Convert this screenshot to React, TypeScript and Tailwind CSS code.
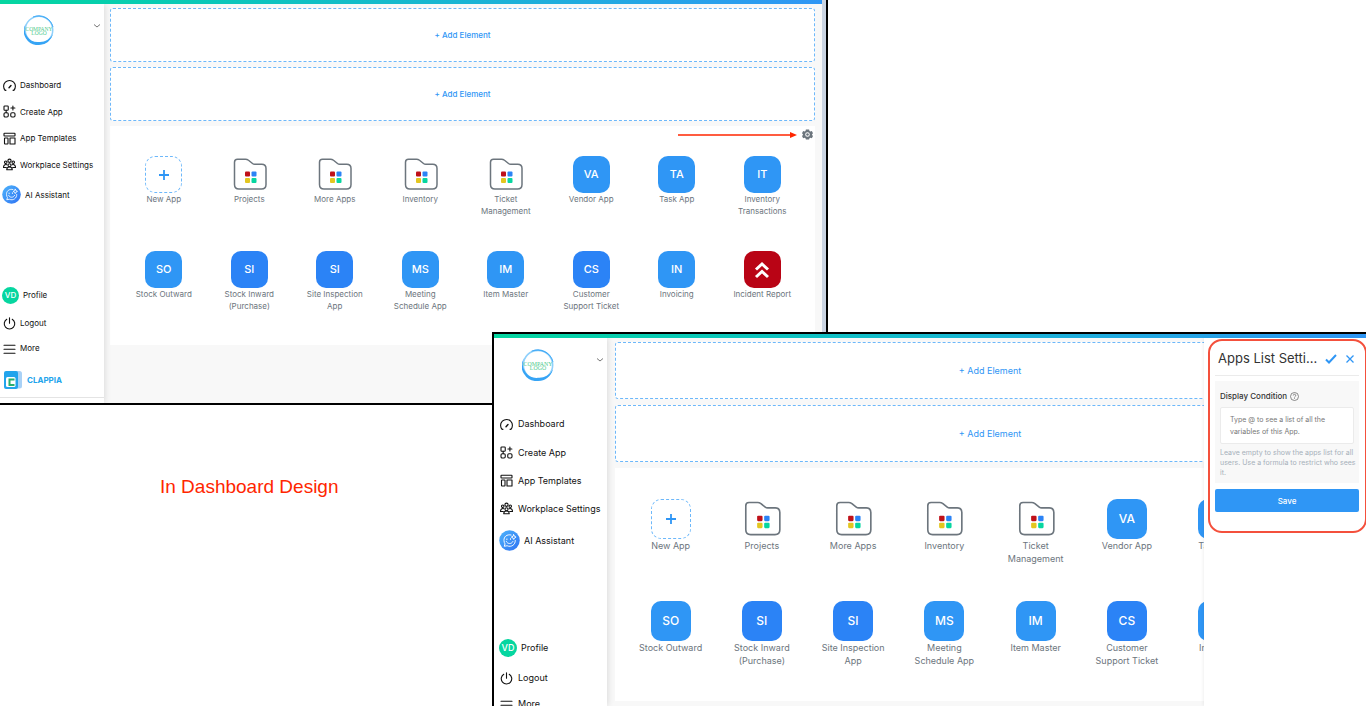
import type { ReactNode } from 'react'

type Size = 'sm' | 'lg'

type AppItem = {
  name: string
  kind?: 'new' | 'folder' | 'alert'
  code?: string
  dark?: boolean
}

const APPS: AppItem[] = [
  { name: 'New App', kind: 'new' },
  { name: 'Projects', kind: 'folder' },
  { name: 'More Apps', kind: 'folder' },
  { name: 'Inventory', kind: 'folder' },
  { name: 'Ticket Management', kind: 'folder' },
  { name: 'Vendor App', code: 'VA' },
  { name: 'Task App', code: 'TA' },
  { name: 'Inventory Transactions', code: 'IT' },
  { name: 'Stock Outward', code: 'SO' },
  { name: 'Stock Inward (Purchase)', code: 'SI', dark: true },
  { name: 'Site Inspection App', code: 'SI', dark: true },
  { name: 'Meeting Schedule App', code: 'MS' },
  { name: 'Item Master', code: 'IM' },
  { name: 'Customer Support Ticket', code: 'CS', dark: true },
  { name: 'Invoicing', code: 'IN' },
  { name: 'Incident Report', kind: 'alert' },
]

const STYLES = {
  sm: {
    sidebar: 'w-[104px] text-[8px]',
    header: 'h-[68px] pt-[11px] pl-[24px] pr-[3px]',
    logo: 'h-[30px] w-[30px]',
    chevron: 'mt-[7px]',
    nav: 'h-[106px]',
    indent: 'gap-[4px] pl-[3px]',
    badgeIndent: 'gap-[4px] pl-[2px]',
    assistant: 'mt-[5px]',
    assistantIcon: 'h-[19px] w-[19px]',
    profile: 'mt-[80px]',
    avatar: 'h-[17px] w-[17px]',
    logout: 'mt-[8px]',
    more: 'mt-[5px]',
    main: 'gap-[5px] pl-[6px] pr-[7px]',
    slot: 'h-[54px] text-[8px] font-medium',
    section: 'pr-[10px] pl-[11px]',
    toolbar: 'h-[30px]',
    grid: 'gap-y-[34px] pb-[33px]',
    tile: 'h-[37px] w-[37px] text-[11px]',
    label: 'h-[24px] w-[64px] text-[8px] leading-[12px]',
  },
  lg: {
    sidebar: 'w-[113px] text-[9px]',
    header: 'h-[72px] pt-[11px] pl-[28px] pr-[3px]',
    logo: 'h-[32px] w-[32px]',
    chevron: 'mt-[7px]',
    nav: 'h-[113px]',
    indent: 'gap-[5px] pl-[6px]',
    badgeIndent: 'gap-[4px] pl-[5px]',
    assistant: 'mt-[6px]',
    assistantIcon: 'h-[21px] w-[21px]',
    profile: 'mt-[87px]',
    avatar: 'h-[18px] w-[18px]',
    logout: 'mt-[10px]',
    more: 'mt-[6px]',
    main: 'gap-[6px] pl-[8px] pr-px',
    slot: 'h-[57px] text-[9px]',
    section: 'px-[10px]',
    toolbar: 'h-[31px]',
    grid: 'gap-y-[36px] pb-[34px]',
    tile: 'h-[40px] w-[40px] text-[12px]',
    label: 'h-[26px] w-[70px] text-[9px] leading-[13px]',
  },
}

function LineIcon({ children }: { children: ReactNode }) {
  return (
    <svg
      viewBox="0 0 26 26"
      className="h-[13px] w-[13px] shrink-0"
      fill="none"
      stroke="currentColor"
      strokeWidth="2.2"
      strokeLinecap="round"
      strokeLinejoin="round"
      aria-hidden="true"
    >
      {children}
    </svg>
  )
}

const NAV: { label: string; icon: ReactNode }[] = [
  {
    label: 'Dashboard',
    icon: (
      <>
        <path d="M6 22.5l-1.500 .5a11.800 11.800 0 1 1 17 0l-1.500-.5" />
        <path d="M12 17.500l4-4.500" strokeWidth="2.800" />
      </>
    ),
  },
  {
    label: 'Create App',
    icon: (
      <>
        <rect x="2" y="2" width="8.5" height="8.5" rx="1.5" />
        <rect x="2" y="15.5" width="8.5" height="8.5" rx="2.5" />
        <rect x="15.5" y="15.5" width="8.5" height="8.5" rx="2.5" />
        <path d="M19.8 2v8M15.8 6h8M6.3 10.5v5" />
      </>
    ),
  },
  {
    label: 'App Templates',
    icon: (
      <>
        <rect x="2" y="2.5" width="22" height="5.5" rx="1" />
        <rect x="3" y="12" width="7" height="12" rx="1" />
        <path d="M14 12h10v12h-10z" />
      </>
    ),
  },
  {
    label: 'Workplace Settings',
    icon: (
      <>
        <circle cx="13" cy="5.5" r="3.2" />
        <circle cx="5.5" cy="8.5" r="2.5" />
        <circle cx="20.5" cy="8.5" r="2.5" />
        <circle cx="13" cy="14.5" r="3" />
        <path d="M7.5 23.5c0-3.5 2.2-5.5 5.5-5.5s5.500 2 5.500 5.500zM8 13.500c-4-1.500-7 1-7 5.500h5.500M18 13.500c4-1.500 7 1 7 5.500h-5.500" />
      </>
    ),
  },
]

function CompanyLogo({ className }: { className: string }) {
  return (
    <svg viewBox="0 0 60 60" className={className} role="img" aria-label="Company logo">
      <circle cx="30" cy="30" r="27.500" fill="none" stroke="#8fd0fb" strokeWidth="3" />
      <path
        d="M4 17A28 28 0 0 0 30 60A29 29 0 0 0 58 38A28 26 0 0 1 30 54A26 26 0 0 1 4 17Z"
        fill="#36a4f5"
      />
      <path d="M18 4A29 29 0 0 1 58 24A30 28 0 0 0 18 4Z" fill="#36a4f5" stroke="#36a4f5" />
      <g fill="#4dc98c" fontFamily="Liberation Serif, serif" textAnchor="middle">
        <text x="30" y="31" fontSize="11">
          COMPANY
        </text>
        <text x="30" y="39" fontSize="11">
          LOGO
        </text>
      </g>
    </svg>
  )
}

function AssistantIcon({ className }: { className: string }) {
  return (
    <svg viewBox="0 0 40 40" className={`shrink-0 ${className}`} fill="none" aria-hidden="true">
      <defs>
        <linearGradient id="assistant" x1="0" y1="0" x2="1" y2="1">
          <stop offset="0" stopColor="#4db4fb" />
          <stop offset="1" stopColor="#2f72f3" />
        </linearGradient>
      </defs>
      <circle cx="20" cy="20" r="19.500" fill="url(#assistant)" />
      <g stroke="#fff" strokeWidth="1.800" strokeLinecap="round" strokeLinejoin="round">
        <path d="M23 9.500C15 7.500 9 13 9.500 20c0 3 1 5 2 6.500L10 31l5.500-1c8 3.500 16-2 15.500-10" />
        <path d="M14 22c2 5 10 5.500 12.500 0M15 17v1.500M22 16.500v1.500" />
        <path d="M28 9l1.500 3 3 1.500-3 1.500-1.500 3-1.500-3-3-1.500 3-1.500z" />
      </g>
    </svg>
  )
}

function ClappiaLogo() {
  return (
    <svg viewBox="0 0 36 36" className="h-[18px] w-[18px] shrink-0" aria-hidden="true">
      <rect x="8" y="0" width="28" height="35" rx="5" fill="#a9d1f6" />
      <rect x="0" y="0" width="28" height="36" rx="4" fill="#22a4ec" />
      <rect x="4" y="12" width="19" height="20" rx="3" fill="#fff" />
      <path d="M19 19v-2h-8v11h8v-2" fill="none" stroke="#27ae6d" strokeWidth="4" />
    </svg>
  )
}

function FolderIcon() {
  return (
    <svg viewBox="0 0 74 74" className="h-full w-full" aria-hidden="true">
      <path
        d="M13 6.500h16c2.500 0 4 .6 6 2l8 6.500c1.500 1.200 2.500 1.500 4.500 1.500h14c6 0 8.500 3 8.500 8.500V57c0 6-3.500 9-9 9H16c-5.500 0-9-3-9-9V12.500c0-4 2.500-6 6-6z"
        fill="none"
        stroke="#6c757d"
        strokeWidth="3"
        strokeLinejoin="round"
      />
      <rect x="28" y="31" width="10" height="10" rx="2" fill="#bf1019" />
      <rect x="41" y="31" width="10" height="10" rx="2" fill="#2b83f6" />
      <rect x="28" y="44" width="10" height="10" rx="2" fill="#e3c620" />
      <rect x="41" y="44" width="10" height="10" rx="2" fill="#07d6a0" />
    </svg>
  )
}

function TileFace({ app, className }: { app: AppItem; className: string }) {
  if (app.kind === 'folder') {
    return (
      <span className={className}>
        <FolderIcon />
      </span>
    )
  }
  if (app.kind === 'new') {
    return (
      <span
        className={`flex items-center justify-center rounded-[10px] border border-dashed border-[#6db8fa] ${className}`}
      >
        <svg viewBox="0 0 10 10" className="h-[10px] w-[10px]" aria-hidden="true">
          <path d="M5 0v10M0 5h10" stroke="#2f96f5" strokeWidth="1.800" />
        </svg>
      </span>
    )
  }
  if (app.kind === 'alert') {
    return (
      <span className={`flex items-center justify-center rounded-[10px] bg-[#b90415] ${className}`}>
        <svg viewBox="0 0 16 18" className="h-[18px] w-[16px]" aria-hidden="true">
          <path
            d="M2 8.500l6-5.500 6 5.500M2 16l6-5.500 6 5.500"
            fill="none"
            stroke="#fff"
            strokeWidth="3"
          />
        </svg>
      </span>
    )
  }
  return (
    <span
      className={`flex items-center justify-center rounded-[10px] font-medium text-white ${
        app.dark ? 'bg-[#2b83f6]' : 'bg-[#2f96f5]'
      } ${className}`}
    >
      {app.code}
    </span>
  )
}

function Sidebar({ size }: { size: Size }) {
  const s = STYLES[size]
  return (
    <aside className={`z-10 shrink-0 bg-white text-[#111] shadow-[1px_0_6px_rgba(0,0,0,0.12)] ${s.sidebar}`}>
      <div className={`flex items-start justify-between ${s.header}`}>
        <CompanyLogo className={s.logo} />
        <button type="button" aria-label="Switch workplace" className={s.chevron}>
          <svg viewBox="0 0 8 8" className="block h-[8px] w-[8px]" fill="none" stroke="#777" aria-hidden="true">
            <path d="M1 2.500l3 2.500 3-2.500" />
          </svg>
        </button>
      </div>

      <nav className={`grid grid-rows-4 ${s.nav}`}>
        {NAV.map((item) => (
          <a key={item.label} href="#" className={`flex items-center ${s.indent}`}>
            <LineIcon>{item.icon}</LineIcon>
            <span className="whitespace-nowrap">{item.label}</span>
          </a>
        ))}
      </nav>

      <a href="#" className={`flex h-[22px] items-center ${s.badgeIndent} ${s.assistant}`}>
        <AssistantIcon className={s.assistantIcon} />
        <span className="pt-[2px]">AI Assistant</span>
      </a>

      <a href="#" className={`flex h-[20px] items-center ${s.badgeIndent} ${s.profile}`}>
        <span
          className={`flex items-center justify-center rounded-full bg-[#06d6a0] font-medium text-white ${s.avatar}`}
        >
          VD
        </span>
        Profile
      </a>
      <a href="#" className={`flex h-[20px] items-center ${s.indent} ${s.logout}`}>
        <LineIcon>
          <path d="M13 1.500v11M7.500 4.500a10.500 10.500 0 1 0 11 0" />
        </LineIcon>
        Logout
      </a>
      <a href="#" className={`flex h-[20px] items-center ${s.indent} ${s.more}`}>
        <LineIcon>
          <path d="M2 6.500h22M2 14.500h22M2 22.500h22" />
        </LineIcon>
        More
      </a>
      <a
        href="#"
        className="mt-[12px] flex h-[20px] items-center gap-[5px] pl-[4px] font-bold text-[#22a4ec]"
      >
        <ClappiaLogo />
        CLAPPIA
      </a>
      <div className="mt-[7px] border-t border-[#e4e4e4]" />
    </aside>
  )
}

function AddElement({ className }: { className: string }) {
  return (
    <button
      type="button"
      className={`w-full shrink-0 rounded-[3px] border border-dashed border-[#6db8fa] bg-white text-[#2f96f5] ${className}`}
    >
      + Add Element
    </button>
  )
}

function Designer({ size, toolbar }: { size: Size; toolbar?: ReactNode }) {
  const s = STYLES[size]
  return (
    <div className="flex h-full flex-col">
      <div className="h-[4px] shrink-0 bg-linear-to-r from-[#06d6a0] to-[#2f96f5]" />
      <div className="flex min-h-0 flex-1 overflow-hidden bg-[#f8f8f8]">
        <Sidebar size={size} />
        <main className={`flex min-w-0 flex-1 flex-col pt-[4px] ${s.main}`}>
          <AddElement className={s.slot} />
          <AddElement className={s.slot} />
          <section className={`shrink-0 bg-white ${s.section}`}>
            <div className={s.toolbar}>{toolbar}</div>
            <div className={`grid grid-cols-8 ${s.grid}`}>
              {APPS.map((app) => (
                <a key={app.name} href="#" className="flex flex-col items-center">
                  <TileFace app={app} className={s.tile} />
                  <span className={`text-center text-[#6c757d] ${s.label}`}>{app.name}</span>
                </a>
              ))}
            </div>
          </section>
        </main>
      </div>
    </div>
  )
}

function GearToolbar() {
  return (
    <div className="-mr-[8px] flex items-center justify-end gap-[5px] pt-[3px]">
      <svg viewBox="0 0 119 8" className="h-[8px] w-[119px]" aria-hidden="true">
        <path d="M0 4h113" stroke="#ff2600" strokeWidth="1.300" />
        <path d="M112 1l7 3-7 3z" fill="#ff2600" />
      </svg>
      <button type="button" aria-label="Apps list settings">
        <svg viewBox="0 0 24 24" className="block h-[11px] w-[11px]" fill="#6c757d" aria-hidden="true">
          <path
            fillRule="evenodd"
            d="M8.500 1h7l.8 3.300 2 1.200 3.200-1 2.500 4.500-2 2.500v1.500l2 2.500-2.500 4.500-3.200-1-2 1.200-.8 2.800h-7l-.8-2.800-2-1.200-3.200 1L0 15.500l2-2.500v-1.500L0 9l2.500-4.500 3.200 1 2-1.200zM12 7a5 5 0 1 0 0 10a5 5 0 0 0 0-10z"
          />
          <circle cx="12" cy="12" r="2.800" />
        </svg>
      </button>
    </div>
  )
}

function SettingsPanel() {
  return (
    <aside className="absolute top-[4px] right-0 bottom-0 w-[162px] bg-white pr-[7px] pl-[11px] shadow-[-1px_0_3px_rgba(0,0,0,0.06)]">
      <div className="flex h-[38px] items-center border-b border-[#ebebeb] pt-[4px] pl-[3px]">
        <h2 className="flex-1 text-[13px] text-[#333]">Apps List Setti...</h2>
        <button type="button" aria-label="Apply" className="mr-[9px]">
          <svg viewBox="0 0 12 10" className="h-[10px] w-[12px]" fill="none" aria-hidden="true">
            <path d="M1 5.500l3 3 7-7.500" stroke="#2f96f5" strokeWidth="2" />
          </svg>
        </button>
        <button type="button" aria-label="Close" className="mr-[5px]">
          <svg viewBox="0 0 8 8" className="h-[8px] w-[8px]" fill="none" aria-hidden="true">
            <path d="M.5.5l7 7M7.500.5l-7 7" stroke="#2f96f5" strokeWidth="1.300" />
          </svg>
        </button>
      </div>

      <div className="mt-[5px] bg-[#f8f8f8] px-[5px] pt-[8px] pb-[5px]">
        <div className="flex items-center gap-[3px]">
          <label htmlFor="condition" className="text-[8px] leading-[14px] font-medium text-[#333]">
            Display Condition
          </label>
          <svg viewBox="0 0 18 18" className="h-[9px] w-[9px]" fill="none" stroke="#666" aria-hidden="true">
            <circle cx="9" cy="9" r="8" strokeWidth="1.500" />
            <path d="M6.500 7a2.500 2.500 0 1 1 3.500 2.300c-.7.300-1 .7-1 1.700M9 12.500v1.500" strokeWidth="1.500" />
          </svg>
        </div>
        <textarea
          id="condition"
          placeholder="Type @ to see a list of all the variables of this App."
          className="mt-[4px] block h-[37px] w-full resize-none overflow-hidden rounded-[2px] border border-[#ebebeb] bg-white px-[9px] py-[6px] text-[7px] leading-[12px] outline-none placeholder:text-[#777]"
        />
        <p className="-mr-[5px] mt-[4px] text-[7px] leading-[10px] text-[#a6b0ba]">
          Leave empty to show the apps list for all users. Use a formula to restrict who sees it.
        </p>
      </div>

      <button
        type="button"
        className="mt-[6px] h-[23px] w-full rounded-[2px] bg-[#2f96f5] text-[8px] font-medium text-white"
      >
        Save
      </button>

      {/* highlight around the form */}
      <div className="pointer-events-none absolute top-px -right-px left-[4px] h-[194px] rounded-[14px] border-2 border-[#f4503c]" />
    </aside>
  )
}

export default function App() {
  return (
    <div className="relative min-h-screen overflow-hidden bg-white font-['Inter',sans-serif]">
      <div className="absolute top-0 left-0 h-[405px] w-[828px] border-r-2 border-b-2 border-black">
        <div className="flex h-full">
          <div className="min-w-0 flex-1">
            <Designer size="sm" toolbar={<GearToolbar />} />
          </div>
          <div className="w-[4px] bg-[#cbd5e3]" />
        </div>
      </div>

      <p className="absolute top-[475px] left-[160px] font-['Liberation_Sans',Arial,sans-serif] text-[19px] leading-[24px] text-[#ff2600]">
        In Dashboard Design
      </p>

      <div className="absolute top-[332px] right-0 bottom-0 left-[492px] overflow-hidden border-t-2 border-l-2 border-black">
        <Designer size="lg" />
        <SettingsPanel />
      </div>
    </div>
  )
}
